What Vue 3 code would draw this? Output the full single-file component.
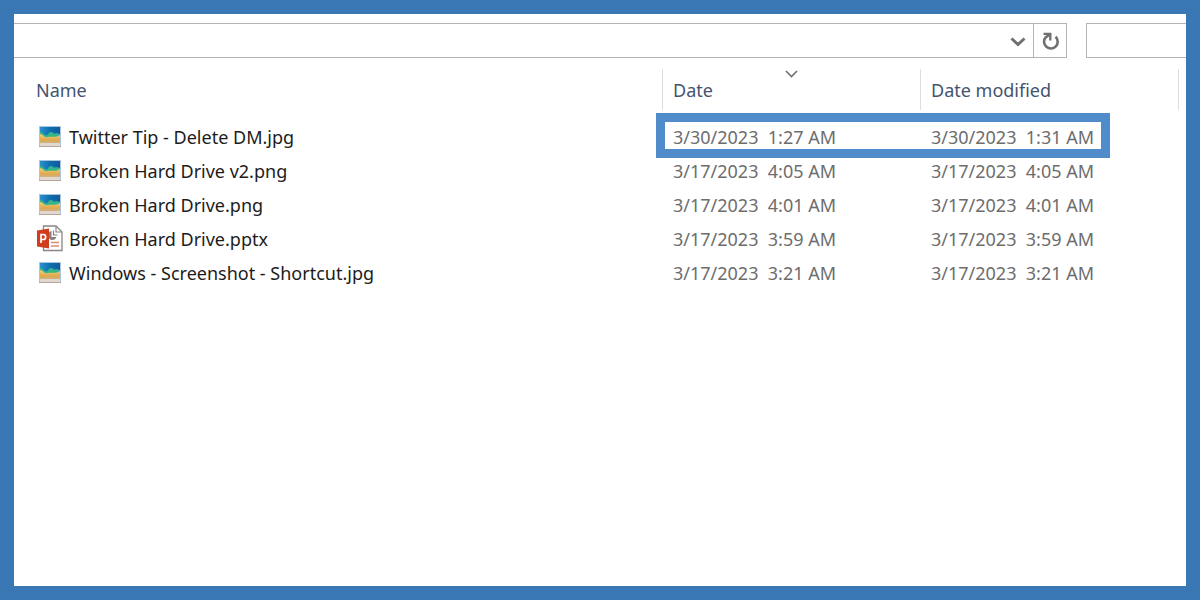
<template>
  <div class="frame">
    <div class="toolbar">
      <div class="address-bar">
        <input v-model="address" class="address-input" type="text" aria-label="Address" />
        <button class="bar-btn" type="button" aria-label="Previous locations">
          <svg width="16" height="12" viewBox="0 0 16 12">
            <path d="M1.5 3.5 L8 9.5 L14.5 3.5" fill="none" stroke="#707070" stroke-width="3" />
          </svg>
        </button>
        <button class="bar-btn refresh" type="button" aria-label="Refresh">
          <svg width="18" height="20" viewBox="0 0 18 20">
            <path d="M14.6 5.8 A6.8 6.8 0 1 1 4.6 6.4 L9 3.2" fill="none" stroke="#707070" stroke-width="2.6" />
            <path d="M2.5 2.8 H9.3 V9.6" fill="none" stroke="#707070" stroke-width="2.3" />
          </svg>
        </button>
      </div>
      <input v-model="search" class="search-input" type="text" aria-label="Search" />
    </div>

    <table class="file-table">
      <thead>
        <tr>
          <th class="col-name">Name</th>
          <th class="col-date">
            Date
            <svg class="sort-arrow" width="14" height="8" viewBox="0 0 14 8">
              <path d="M1 1 L6.5 6.5 L12 1" fill="none" stroke="#707070" stroke-width="1.6" />
            </svg>
          </th>
          <th class="col-date">Date modified</th>
          <td class="col-rest"></td>
        </tr>
      </thead>
      <tbody>
        <tr v-for="file in files" :key="file.name">
          <td class="col-name">
            <div class="file-name">
              <svg v-if="file.type === 'image'" class="file-icon" width="26" height="24" viewBox="0 0 26 24">
                <defs>
                  <linearGradient id="sky" x1="0" y1="0" x2="1" y2="0">
                    <stop offset="0" stop-color="#2f8fd0" />
                    <stop offset="0.5" stop-color="#0b6fae" />
                    <stop offset="1" stop-color="#155a9c" />
                  </linearGradient>
                  <linearGradient id="sand" x1="0" y1="0" x2="0" y2="1">
                    <stop offset="0" stop-color="#f0cf78" />
                    <stop offset="0.6" stop-color="#dfa94c" />
                    <stop offset="1" stop-color="#c9b49c" />
                  </linearGradient>
                </defs>
                <rect x="2" y="1" width="22" height="21" fill="#a9c4dc" />
                <rect x="3" y="2" width="20" height="12" fill="url(#sky)" />
                <path d="M3 7 C5 6 6 9 8 10 C11 12 11 7 14 7 C17 7 16 10 19 8 L23 9 V13 H3 Z" fill="#35b58c" />
                <path d="M3 9 C6 9 7 13 11 12 C15 11 18 13 23 10 V19 H3 Z" fill="url(#sand)" />
                <rect x="3" y="18" width="20" height="3" fill="#e3d8cf" />
                <path d="M2 21.5 H24" stroke="#b7a59a" />
              </svg>
              <svg v-else class="file-icon" width="26" height="28" viewBox="0 0 26 28">
                <path d="M6.5 1 H19 L25 7 V25.5 H6.5 Z" fill="#fff" stroke="#8b8583" stroke-width="1.3" />
                <path d="M19 1 V7 H25" fill="none" stroke="#8b8583" stroke-width="1.2" />
                <path d="M14.5 6 A4.5 4.5 0 1 0 19.5 12 H14.5 Z" fill="#85807f" />
                <path d="M16.5 5.5 V10 H20.5" fill="none" stroke="#85807f" stroke-width="1.2" />
                <path d="M14 17.5 H22 M14 21 H22" stroke="#e0896f" stroke-width="1.4" />
                <path d="M0 5.5 L12 3.5 V23.5 L0 21.5 Z" fill="#d23c1e" />
                <path d="M4 18 V9.5 H6.2 A2.5 2.5 0 0 1 6.2 14.5 H4" fill="none" stroke="#fff" stroke-width="1.7" />
              </svg>
              <span>{{ file.name }}</span>
            </div>
          </td>
          <td class="col-date">
            {{ file.date }}&nbsp; {{ file.time }}
            <span v-if="file.marked" class="marker"></span>
          </td>
          <td class="col-date">{{ file.date }}&nbsp; {{ file.modified }}</td>
          <td class="col-rest"></td>
        </tr>
      </tbody>
    </table>
  </div>
</template>

<script setup>
import { ref } from 'vue';

const address = ref('');
const search = ref('');

const files = ref([
  { name: 'Twitter Tip - Delete DM.jpg', type: 'image', date: '3/30/2023', time: '1:27 AM', modified: '1:31 AM', marked: true },
  { name: 'Broken Hard Drive v2.png', type: 'image', date: '3/17/2023', time: '4:05 AM', modified: '4:05 AM' },
  { name: 'Broken Hard Drive.png', type: 'image', date: '3/17/2023', time: '4:01 AM', modified: '4:01 AM' },
  { name: 'Broken Hard Drive.pptx', type: 'slides', date: '3/17/2023', time: '3:59 AM', modified: '3:59 AM' },
  { name: 'Windows - Screenshot - Shortcut.jpg', type: 'image', date: '3/17/2023', time: '3:21 AM', modified: '3:21 AM' }
]);
</script>

<style>
body {
  margin: 0;
}
</style>

<style scoped>
.frame {
  box-sizing: border-box;
  min-height: 100vh;
  border: 14px solid #3977b5;
  background: #fff;
  font-family: "Noto Sans", "Open Sans", sans-serif;
  font-size: 18px;
  overflow: hidden;
}

.toolbar {
  display: flex;
  gap: 19px;
  padding-top: 9px;
}

.address-bar {
  box-sizing: border-box;
  display: flex;
  flex: 1;
  height: 35px;
  border: 1px solid #b4b4b4;
  border-left: none;
}

.address-input {
  flex: 1;
  min-width: 0;
  border: none;
  padding: 0 8px;
  font: inherit;
  outline: none;
}

.bar-btn {
  display: flex;
  align-items: center;
  justify-content: center;
  width: 30px;
  padding: 0;
  border: none;
  background: none;
}

.refresh {
  width: 33px;
  border-left: 1px solid #b4b4b4;
}

.search-input {
  box-sizing: border-box;
  width: 100px;
  height: 35px;
  border: 1px solid #b4b4b4;
  border-right: none;
  border-radius: 0;
  padding: 0 8px;
  font: inherit;
  outline: none;
}

.file-table {
  width: 100%;
  margin-top: 11px;
  border-collapse: separate;
  border-spacing: 0;
  table-layout: fixed;
}

th,
td {
  padding: 0;
  text-align: left;
  font-weight: normal;
  white-space: nowrap;
}

th {
  position: relative;
  height: 41px;
  color: #44546f;
}

tbody td {
  position: relative;
  height: 34px;
  color: #6d6d6d;
}

thead::after {
  content: "";
  display: block;
  height: 10px;
}

th.col-name {
  padding-left: 22px;
}

.col-date {
  box-sizing: border-box;
  width: 258px;
  padding-left: 11px;
}

.col-rest {
  width: 8px;
}

th.col-date,
thead .col-rest {
  border-left: 1px solid #dedede;
}

th.col-date {
  padding-left: 10px;
}

thead .col-rest {
  box-sizing: border-box;
}

.sort-arrow {
  position: absolute;
  top: 1px;
  left: 50%;
  margin-left: -7px;
}

.file-name {
  display: flex;
  align-items: center;
  gap: 6px;
  padding-left: 23px;
  color: #1c1c1c;
}

.file-icon {
  flex: none;
}

.marker {
  position: absolute;
  top: -7px;
  right: -190px;
  bottom: -4px;
  left: -6px;
  border: 9px solid #4f8cc9;
  pointer-events: none;
  z-index: 1;
}
</style>
